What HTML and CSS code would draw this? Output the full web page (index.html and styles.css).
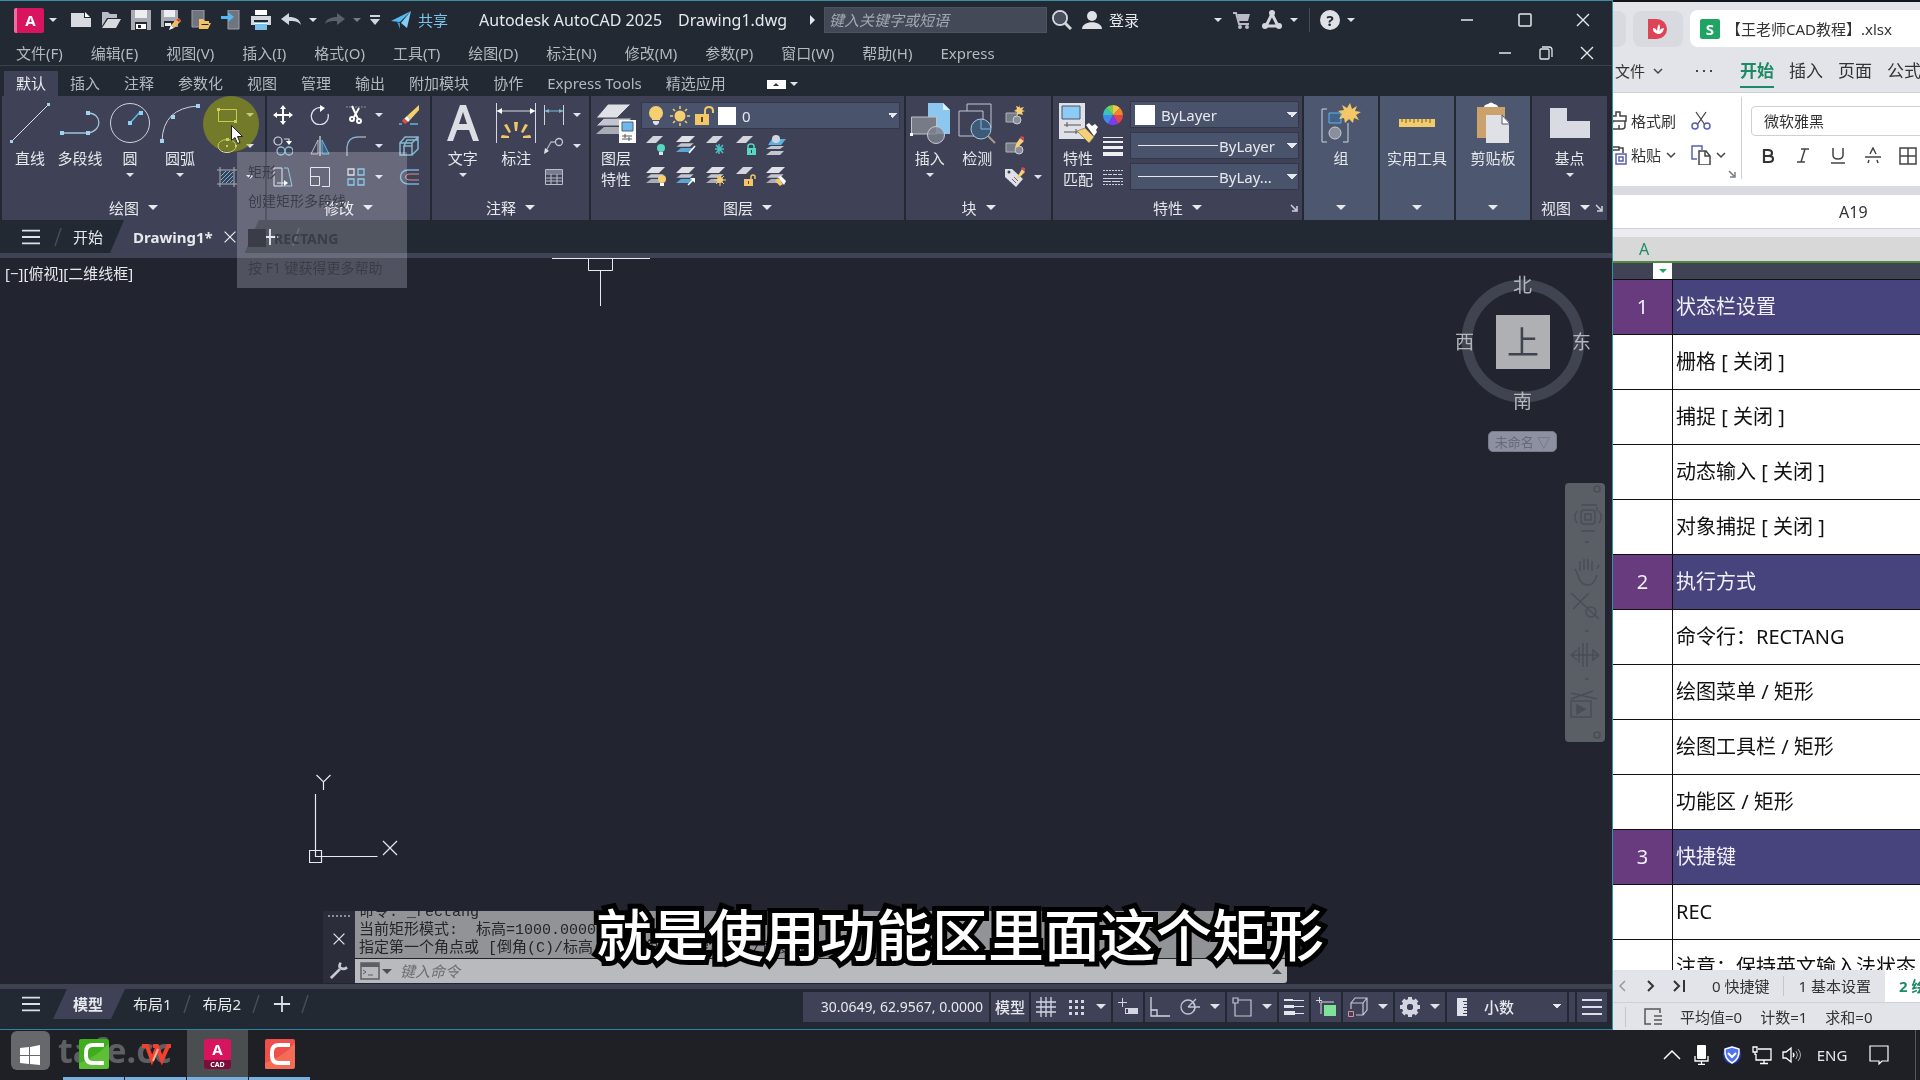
FILE: index.html
```html
<!DOCTYPE html>
<html lang="zh-CN">
<head>
<meta charset="utf-8">
<title>Autodesk AutoCAD 2025</title>
<link rel="stylesheet" href="styles.css">
</head>
<body>
<svg class="sprite" aria-hidden="true">
  <symbol id="new" viewBox="0 0 20 20"><path fill="#d8dae0" d="M0 3h13v5h7v9H0z"/><path fill="#fff" d="M14 2l5 5h-5z"/></symbol>
  <symbol id="open" viewBox="0 0 20 20"><path fill="#b9bcc6" d="M1 2h6l2 2h7v4H6L1 16z"/><path fill="#d8dae0" d="M7 9h13l-5 9H1z"/></symbol>
  <symbol id="save" viewBox="0 0 20 20"><path fill="#a9abb3" d="M0 0h20v20H0z"/><path fill="#eceef2" d="M4 0h12v8H4z"/><path fill="#222933" d="M4 12h12v8H4z"/><path fill="#fff" d="M5 14h10v5H5z"/><path fill="#222933" d="M7 15h3v3H7z"/></symbol>
  <symbol id="saveas" viewBox="0 0 20 20"><path fill="#a9abb3" d="M0 0h17v17H0z"/><path fill="#eceef2" d="M3 0h11v7H3z"/><path fill="#222933" d="M3 11h10v6H3z"/><path fill="#eceef2" d="M4 13h6v3H4z"/><path fill="#f3bd62" d="M17 8l3 3-7 7-3-3z"/><path fill="#c8473d" d="M18 8l2 2-2 2-3-2z"/><path fill="#fff" d="M10 15l3 3-5 2z"/></symbol>
  <symbol id="openweb" viewBox="0 0 20 20"><path fill="#70747f" stroke="#9da1ab" d="M1 0h12v17H1z"/><path fill="#f2c168" d="M8 9h4l2 2h4v2h2l-3 6H8z"/><path fill="#222933" d="M10 14h8l-1 1h-6z"/></symbol>
  <symbol id="saveweb" viewBox="0 0 20 20"><path fill="#70747f" stroke="#9da1ab" d="M7 0h11v19H7z"/><path fill="#58b7ef" d="M0 6h7V2l6 5-6 5V9H0z"/></symbol>
  <symbol id="print" viewBox="0 0 20 20"><path fill="#fff" d="M4 0h12v5H4z"/><path fill="#d3d6dc" d="M0 6h20v9H0z"/><path fill="#222933" d="M3 10h14v2H3z"/><path fill="#7cbfe8" d="M4 12h12v8H4z"/><path fill="#fff" d="M4 13h12v1H4z"/></symbol>
  <symbol id="undo" viewBox="0 0 20 20"><path fill="#d3d6dc" d="M0 9l8-6v4c6 0 11 2 12 8-3-4-7-4-12-4v4z"/></symbol>
  <symbol id="redo" viewBox="0 0 20 20"><path fill="#5a606b" d="M20 9l-8-6v4C6 7 1 9 0 14c3-3 7-3 12-3v4z"/></symbol>
  <symbol id="custom" viewBox="0 0 20 20"><path fill="#d3d6dc" d="M5 5h10v2H5zM5 9h10l-5 6z"/></symbol>
  <symbol id="plane" viewBox="0 0 20 20"><path fill="#58b7ef" d="M0 11L20 1 9 12z"/><path fill="#86cdf5" d="M20 1l-4 17-6-5z"/><path fill="#3b95cf" d="M6 12l3 1v6z"/></symbol>
  <symbol id="search" viewBox="0 0 20 20"><g fill="none" stroke="#d3d6dc" stroke-width="2"><circle cx="8" cy="8" r="7"/><path stroke-width="3" d="M13 13l6 6"/></g><circle cx="8" cy="8" r="6" fill="#4a505d"/></symbol>
  <symbol id="user" viewBox="0 0 20 20"><circle cx="10" cy="6" r="5" fill="#dfe1e6"/><path fill="#dfe1e6" d="M0 19c0-9 20-9 20 0z"/></symbol>
  <symbol id="cart" viewBox="0 0 20 20"><path fill="none" stroke="#b9bbc6" stroke-width="2" d="M1 3h3l3 11h10"/><path fill="#b9bbc6" d="M5 4h13l-2 7H7z"/><circle cx="8" cy="17" r="2" fill="#b9bbc6"/><circle cx="15" cy="17" r="2" fill="#b9bbc6"/></symbol>
  <symbol id="apps" viewBox="0 0 20 20"><path fill="none" stroke="#d3d6dc" stroke-width="3" d="M10 4L4 16h12z"/><g fill="#d3d6dc"><circle cx="10" cy="3" r="3"/><circle cx="3" cy="16" r="3"/><circle cx="17" cy="16" r="3"/></g></symbol>
  <symbol id="min" viewBox="0 0 20 20"><path fill="none" stroke="#e6e8ec" stroke-width="1.5" d="M4 10h12"/></symbol>
  <symbol id="max" viewBox="0 0 20 20"><rect x="4" y="4" width="12" height="12" rx="1" fill="none" stroke="#e6e8ec" stroke-width="1.5"/></symbol>
  <symbol id="restore" viewBox="0 0 20 20"><g fill="none" stroke="#e6e8ec" stroke-width="1.3"><rect x="4" y="6" width="9" height="10" rx="1"/><path d="M6 4h7q3 0 3 3v7"/></g></symbol>
  <symbol id="close" viewBox="0 0 20 20"><path fill="none" stroke="#e6e8ec" stroke-width="1.4" d="M4 4l12 12M16 4L4 16"/></symbol>
  <symbol id="menu" viewBox="0 0 20 20"><path fill="none" stroke="#dcdfe8" stroke-width="2" d="M0 3h20M0 10h20M0 17h20"/></symbol>
  <symbol id="plus" viewBox="0 0 20 20"><path fill="none" stroke="#dcdfe8" stroke-width="2" d="M10 1v18M1 10h18"/></symbol>
  <symbol id="slash" viewBox="0 0 8 20"><path fill="none" stroke="#454c5b" stroke-width="1.5" d="M1 19L7 1"/></symbol>

  <symbol id="line" viewBox="0 0 40 40"><path stroke="#dfe2ea" d="M2 38L38 2"/><path fill="#9fd3ee" d="M0 37h3v3H0zM37 0h3v3h-3z"/></symbol>
  <symbol id="pline" viewBox="0 0 40 40"><path fill="none" stroke="#9fc3da" stroke-width="1.3" d="M2 30h26c15-2 14-20 0-20"/><path fill="#9fd3ee" d="M0 28h4v4H0zM26 28h4v4h-4zM26 8h4v4h-4z"/></symbol>
  <symbol id="circle" viewBox="0 0 40 40"><circle cx="20" cy="20" r="19.5" fill="none" stroke="#cfd2dc"/><path stroke="#63b4e4" stroke-width="1.5" d="M20 20L30 9"/><path fill="#8cd0f3" d="M18 18h4v4h-4zM29 8h4v4h-4z"/></symbol>
  <symbol id="arc" viewBox="0 0 40 40"><path fill="none" stroke="#cfd2dc" d="M2 38Q3 5 38 3"/><path fill="#9fd3ee" d="M0 36h4v4H0zM36 1h4v4h-4zM11 12h4v4h-4z"/></symbol>
  <symbol id="rect" viewBox="0 0 20 20"><path fill="none" stroke="#e5e79a" d="M1.500 4.500h18v12h-18z"/><path fill="#e9ecc0" d="M0 3h3v3H0zM17 15h3v3h-3z"/></symbol>
  <symbol id="ellipse" viewBox="0 0 20 20"><ellipse cx="10" cy="10" rx="9" ry="6.500" fill="none" stroke="#e5e79a"/><path fill="#e9ecc0" d="M9 9h2v2H9zM18 9h2v2h-2zM9 2h3v3H9z"/></symbol>
  <symbol id="hatch" viewBox="0 0 20 20"><path fill="none" stroke="#a9aebc" d="M3 0v20M17 0v20M0 3h20M0 17h20"/><path fill="none" stroke="#64b7dd" d="M4 9l5-5M4 13l9-9M5 16L16 5M9 16l7-7M13 16l3-3"/></symbol>
  <symbol id="move" viewBox="0 0 20 20"><path stroke="#fff" stroke-width="2" d="M10 2v16M2 10h16"/><path fill="#fff" d="M10 0l3 4H7zM10 20l3-4H7zM0 10l4-3v6zM20 10l-4-3v6z"/></symbol>
  <symbol id="rotate" viewBox="0 0 20 20"><path fill="none" stroke="#dfe2ea" stroke-width="1.3" d="M12 3a8.500 8.500 0 1 0 6 6"/><path fill="#fff" d="M10 0l5 3-5 4z"/></symbol>
  <symbol id="trim" viewBox="0 0 20 20"><path stroke="#888da0" stroke-dasharray="2 1" d="M0 2h20"/><path fill="none" stroke="#fff" stroke-width="2" d="M6 1l6 13M13 3L8 12"/><circle cx="6" cy="14" r="2" fill="none" stroke="#fff" stroke-width="2"/><circle cx="13" cy="16" r="2" fill="none" stroke="#fff" stroke-width="2"/></symbol>
  <symbol id="erase" viewBox="0 0 20 20"><path stroke="#63b4e4" stroke-width="1.300" d="M0 19h3M11 19h8"/><path fill="#f5cf6b" d="M20 0v5L11 15l-3-4z"/><path fill="#fff" d="M8 11l3 4-2 2-4-3z"/><path fill="#e0503e" d="M5 13l4 4-3 2-3-3z"/></symbol>
  <symbol id="copy" viewBox="0 0 20 20"><g fill="none" stroke="#cfd2dc" stroke-width="1.200"><circle cx="5" cy="5" r="4"/><path d="M11 3h5v3"/></g><path fill="#fff" d="M13 5h6l-3 4z"/><g fill="none" stroke="#88bdd8" stroke-width="1.300"><circle cx="8" cy="15" r="4"/><circle cx="16" cy="15" r="4"/></g></symbol>
  <symbol id="mirror" viewBox="0 0 20 20"><path stroke="#fff" d="M10 0v20"/><path fill="none" stroke="#b6bbc8" d="M8 4v14H1z"/><path fill="#39637f" stroke="#63b4e4" d="M12 4v14h7z"/></symbol>
  <symbol id="fillet" viewBox="0 0 20 20"><path fill="none" stroke="#7fb9d8" stroke-width="1.300" d="M1 11Q2 1 12 1"/><path fill="none" stroke="#cfd2dc" d="M1 11v9M12 1h8"/></symbol>
  <symbol id="explode" viewBox="0 0 20 20"><path fill="none" stroke="#85b7ce" stroke-width="1.500" d="M1 7h12v12H1zM1 7l5-6h13v12l-6 6M13 7l6-6M5 10v9M13 10H5l3-6h11"/></symbol>
  <symbol id="stretch" viewBox="0 0 20 20"><path fill="none" stroke="#dfe2ea" d="M1 1h8v18H1zM4 16h8"/><path fill="none" stroke="#7fb9d8" d="M11 1h4l4 18H9"/><path fill="#fff" d="M11 13l4 3-4 3z"/></symbol>
  <symbol id="scale" viewBox="0 0 20 20"><path fill="none" stroke="#dfe2ea" d="M.5 12V.5h19v19H12M.5 9.500h9v9h-9z"/></symbol>
  <symbol id="array" viewBox="0 0 20 20"><g fill="none" stroke-width="1.300"><path stroke="#d5d8e0" d="M2 2h6v6H2z"/><path stroke="#71bce0" d="M12 2h6v6h-6zM2 12h6v6H2zM12 12h6v6h-6z"/></g></symbol>
  <symbol id="offset" viewBox="0 0 20 20"><path fill="none" stroke="#6fb4d8" stroke-width="1.300" d="M20 3H9c-10 0-10 14 0 14h11"/><path fill="none" stroke="#e08a92" d="M20 7h-9c-6 0-6 6 0 6h9"/></symbol>
  <symbol id="text" viewBox="0 0 40 40"><path fill="#dcdee4" d="M4 38L17 2h6l13 36h-6l-4-11H14l-4 11zM16 21h8L20 9z"/></symbol>
  <symbol id="dim" viewBox="0 0 40 40"><path stroke="#d5d8e0" d="M.5 0v40M39.500 0v40M0 8h40"/><path fill="#fff" d="M1 8l5-3v6zM39 8l-5-3v6z"/><g fill="#f3c767"><path d="M18 19h4l-1 9h-2zM8 22l3-1 4 8-2 1zM32 22l-3-1-4 8 2 1zM5 34l1-2 7 1v2H5zM35 34l-1-2-7 1v2h8z"/></g></symbol>
  <symbol id="lindim" viewBox="0 0 20 20"><path stroke="#cfd2dc" d="M.5 0v20M19.500 0v20"/><path stroke="#7fb9d8" d="M1 6h18"/><path fill="#7fb9d8" d="M1 6l4-2v4zM19 6l-4-2v4z"/></symbol>
  <symbol id="leader" viewBox="0 0 20 20"><path fill="none" stroke="#a9aebc" stroke-width="1.300" d="M2 15L7 6h5"/><circle cx="15" cy="6" r="3.500" fill="none" stroke="#c5c9d4" stroke-width="1.300"/><path fill="#dfe2ea" d="M0 18l1-6 4 3z"/></symbol>
  <symbol id="table" viewBox="0 0 20 20"><path fill="none" stroke="#b9bdca" d="M1.500 2.500h17v15h-17zM1 7h18M1 11h18M1 14h18M7 7v11M13 7v11"/><path fill="#777c8e" d="M2 3h16v3H2z"/></symbol>

  <symbol id="stack" viewBox="0 0 20 20"><path fill="#a9acb5" d="M5 13h13l-4 4H0z"/><path fill="#c3c6cf" d="M5 8h13l-4 4H0z" stroke="#3f4256" stroke-width=".5"/><path fill="#dfe1e6" d="M6 1h13l-6 6H0z"/></symbol>
  <symbol id="stackblue" viewBox="0 0 20 20"><path fill="#5ba5d4" d="M5 13h13l-4 4H0z"/><path fill="#c3c6cf" d="M5 8h13l-4 4H0z" stroke="#3f4256" stroke-width=".5"/><path fill="#dfe1e6" d="M6 1h13l-6 6H0z"/></symbol>
  <symbol id="sheet" viewBox="0 0 20 20"><path fill="#d3d5dc" d="M7 1h10l-7 7H0z"/></symbol>
  <symbol id="bulb" viewBox="0 0 20 20"><circle cx="10" cy="7" r="7" fill="#f6cf73"/><path fill="#f6cf73" d="M6 11h8v3H6z"/><path fill="#dfe1e6" d="M7 15h6v2l-2 2H9l-2-2z"/></symbol>
  <symbol id="sun" viewBox="0 0 20 20"><circle cx="10" cy="10" r="5.500" fill="#f6cf73"/><path stroke="#f6cf73" stroke-width="1.500" d="M10 0v3M10 17v3M0 10h3M17 10h3M3 3l2 2M15 15l2 2M17 3l-2 2M3 17l2-2"/></symbol>
  <symbol id="unlock" viewBox="0 0 20 20"><path fill="none" stroke="#f3c767" stroke-width="2" d="M11 9V5q0-4 4-4t4 4v2"/><path fill="#f3c767" d="M1 8h14v11H1z"/><path fill="#5d4a20" d="M7 11h2v5H7z"/></symbol>
  <symbol id="layoff" viewBox="0 0 20 20"><use href="#sheet"/><circle cx="15" cy="13" r="4" fill="#57d6c2"/><path fill="#dfe1e6" d="M13 17h4v3h-4z"/></symbol>
  <symbol id="layiso" viewBox="0 0 20 20"><use href="#stackblue"/><path stroke="#fff" stroke-width="1.500" d="M13 18l6-7"/></symbol>
  <symbol id="layfrz" viewBox="0 0 20 20"><use href="#sheet"/><path stroke="#4cc0c2" stroke-width="1.500" d="M13 9v10M9 14h9M10 10l7 8M17 10l-7 8"/></symbol>
  <symbol id="laylock" viewBox="0 0 20 20"><use href="#sheet"/><path fill="none" stroke="#57d6c2" stroke-width="1.500" d="M12 13v-2q0-2 3-2t3 2v2"/><path fill="#57d6c2" d="M11 13h9v7h-9z"/><path stroke="#236" d="M15.500 15v3"/></symbol>
  <symbol id="laymatch" viewBox="0 0 20 20"><path fill="#c3c6cf" d="M5 16h13l-4 4H0zM5 11h13l-4 3H0z"/><path fill="#5db0e4" d="M6 4h14l-5 6H2z"/><circle cx="10" cy="4" r="4" fill="#d3d5dc"/></symbol>
  <symbol id="layon" viewBox="0 0 20 20"><use href="#stack"/><circle cx="16" cy="13" r="4" fill="#f6cf73"/><path fill="#fff" d="M14 17h4v3h-4z"/></symbol>
  <symbol id="layprev" viewBox="0 0 20 20"><use href="#stackblue"/><path stroke="#fff" stroke-width="1.500" d="M12 19l5-5"/><path fill="#fff" d="M14 12h5v5z"/></symbol>
  <symbol id="laythaw" viewBox="0 0 20 20"><use href="#stack"/><circle cx="14" cy="14" r="3" fill="#f6cf73"/><path stroke="#f6cf73" d="M14 8v12M8 14h12M10 10l8 8M18 10l-8 8"/></symbol>
  <symbol id="layunl" viewBox="0 0 20 20"><use href="#sheet"/><path fill="none" stroke="#f3c767" stroke-width="1.500" d="M15 13v-2q0-2 2-2t2 2v2"/><path fill="#f3c767" d="M8 13h9v7H8z"/><path stroke="#5d4a20" d="M12.500 15v3"/></symbol>
  <symbol id="laycur" viewBox="0 0 20 20"><use href="#stack"/><path fill="#f3c767" d="M12 12l5 6-3 2-5-5z"/><path fill="#fff" d="M12 11l3-1 5 5-2 4z"/></symbol>
  <symbol id="layprop" viewBox="0 0 40 40"><path fill="#a9acb5" d="M8 24h28l-7 7H0z"/><path fill="#c3c6cf" d="M8 15h28l-7 8H0z" stroke="#3f4256"/><path fill="#dfe1e6" d="M12 1h23L21 15H0z" stroke="#3f4256"/><path fill="#fff" d="M23 17h17v23H23z"/><path fill="#6db7ea" stroke="#47627a" d="M26 19h11v9H26z"/><path stroke="#555" d="M26 33h10M26 36h10M29 31v4M33 34v4"/></symbol>
  <symbol id="insert" viewBox="0 0 40 42"><path fill="#8bc7ee" d="M18 1h15l7 7v24H18z"/><path fill="#d9f0fd" d="M33 1l7 7h-7z"/><path fill="#777b85" stroke="#c0c3cc" d="M1.500 15h25v17h-25z"/><circle cx="26" cy="33" r="8.500" fill="#7d828f" fill-opacity=".8" stroke="#c8cbd4"/><path fill="#fff" d="M0 31h3v3H0z"/></symbol>
  <symbol id="detect" viewBox="0 0 40 40"><path fill="#3f4256" stroke="#c3c6cf" d="M10 1h24v24H10z"/><path fill="#3f4256" stroke="#c3c6cf" d="M2 8h24v25H2z"/><circle cx="24" cy="26" r="10" fill="#3f5a78" stroke="#a6cbe2"/><path fill="none" stroke="#7fb9d8" d="M24 16v10h10"/><path stroke="#a98" stroke-width="2" d="M31 33l7 7"/></symbol>
  <symbol id="blknew" viewBox="0 0 20 20"><path fill="#777b85" stroke="#b0b3bd" d="M1 8h11v9H1z"/><circle cx="12" cy="15" r="4" fill="#8b8f9b" stroke="#c8cbd4"/><path fill="#f6cf73" d="M14 0l1 3 4-1-2 3 3 1-3 1 1 3-4-1-2 1v-3l-3-1 3-2-1-3 3 1z"/></symbol>
  <symbol id="blkedit" viewBox="0 0 20 20"><path fill="#777b85" stroke="#b0b3bd" d="M1 7h13v9H1z"/><circle cx="14" cy="14" r="4" fill="#8b8f9b" stroke="#c8cbd4"/><path fill="#f6cf73" d="M15 2l4 3-6 6-3 1 1-4z"/><path fill="#d6455a" d="M16 0l3 1v3l-4-2z"/></symbol>
  <symbol id="attr" viewBox="0 0 20 20"><path fill="#dfe1e6" d="M0 2h7l11 10-7 8L0 10z"/><circle cx="4" cy="5" r="1.500" fill="#3f4256"/><path stroke="#667" d="M7 12l4 4M9 10l4 4"/><path fill="#f6cf73" d="M17 2l3 3-6 6-3 1z"/><path fill="#d6455a" d="M17 0l3 1v3l-4-2z"/></symbol>
  <symbol id="match" viewBox="0 0 40 42"><path fill="#dfe1e6" d="M1 1h26v36H1z"/><path fill="#8bcbf5" stroke="#4a5568" d="M4 4h18v13H4z"/><path stroke="#555" d="M6 23h17M6 30h17M9 20v5M18 27v5"/><path fill="#f2cf78" stroke="#8b7a40" stroke-width=".7" d="M27 26l9 9-5 6-12-12z"/><path fill="#fff" d="M28 23l3-2 3 3 3-2 3 3-2 3 1 2-3 4z"/></symbol>
  <symbol id="wheel" viewBox="0 0 20 20"><path fill="#f4c542" d="M10 10V0a10 10 0 0 1 7 3z"/><path fill="#f0872f" d="M10 10l7-7a10 10 0 0 1 3 7z"/><path fill="#e2434c" d="M10 10h10a10 10 0 0 1-5 8.700z"/><path fill="#7a3cf0" d="M10 10l5 8.700a10 10 0 0 1-10 0z"/><path fill="#3e8bea" d="M10 10l-5 8.700A10 10 0 0 1 0 10z"/><path fill="#35c6c0" d="M10 10H0a10 10 0 0 1 3-7z"/><path fill="#6fd05a" d="M10 10L3 3a10 10 0 0 1 7-3z"/></symbol>
  <symbol id="lw" viewBox="0 0 20 20"><path fill="#eceef2" d="M0 1h20v1H0zM0 5h20v2H0zM0 10h20v3H0zM0 16h20v4H0z"/></symbol>
  <symbol id="lt" viewBox="0 0 20 20"><path fill="none" stroke="#cfd2dc" stroke-dasharray="2 1" d="M0 3.500h20"/><path fill="none" stroke="#cfd2dc" stroke-dasharray="4 1" d="M0 7.500h20"/><path fill="none" stroke="#cfd2dc" d="M0 11.500h20"/><path fill="none" stroke="#cfd2dc" stroke-dasharray="8 1" d="M0 14.500h20"/><path fill="none" stroke="#cfd2dc" stroke-dasharray="2 1" d="M0 17.500h20"/></symbol>
  <symbol id="group" viewBox="0 0 40 40"><path fill="none" stroke="#cfd2dc" d="M6 6H1v33h5M22 39h5V20"/><path fill="#41638c" stroke="#63b4e4" d="M8 10h12v10H8z"/><circle cx="14" cy="30" r="6" fill="#8b8f9b" stroke="#c8cbd4"/><path fill="#f3c767" d="M29 0l2 6 5-3-2 5 6 1-5 3 3 5-5-2-1 5-4-4-4 4-1-5-5 1 3-5-4-3 6-1-2-5 5 3z"/></symbol>
  <symbol id="ruler" viewBox="0 0 40 40"><path fill="#f3cb6b" d="M2 16h36v8H2z"/><path stroke="#6c5a2c" d="M5 16v3M9 16v4M13 16v3M17 16v4M21 16v3M25 16v4M29 16v3M33 16v4"/></symbol>
  <symbol id="clip" viewBox="0 0 40 42"><path fill="#cba26c" d="M4 5h28v31H4z"/><path fill="#fff" d="M11 5q0-2 4-3 3-3 6 0 4 1 4 3z"/><path fill="#dfe1e6" d="M13 13h16l7 7v21H13z"/><path fill="#fff" stroke="#4d5870" d="M29 13l8 9h-8z"/></symbol>
  <symbol id="base" viewBox="0 0 40 40"><path fill="#d8dbe2" d="M0 5h17v13h23v17H0z"/></symbol>
  <symbol id="corner" viewBox="0 0 10 10"><path fill="none" stroke="#cdd0da" stroke-width="1.500" d="M2 2l5 5M8 3v5H3"/></symbol>

  <symbol id="grid" viewBox="0 0 20 20"><path stroke="#d3d6e2" stroke-width="1.300" d="M5 0v20M10 0v20M15 0v20M0 5h20M0 10h20M0 15h20"/></symbol>
  <symbol id="snap" viewBox="0 0 20 20"><path fill="none" stroke="#d3d6e2" stroke-width="3" stroke-dasharray="3 3" d="M3 4.500h15M3 10.500h15M3 16.500h15"/></symbol>
  <symbol id="dyn" viewBox="0 0 20 20"><path stroke="#d3d6e2" d="M4.500 1v9M0 5.500h9"/><path fill="#d3d6e2" d="M7 11h13v6H7z"/><path fill="#3f4256" d="M8 12h2v4H8z"/></symbol>
  <symbol id="ortho" viewBox="0 0 20 20"><path fill="none" stroke="#d3d6e2" stroke-width="1.300" d="M1 0v19h19M1 13h6v6"/></symbol>
  <symbol id="polar" viewBox="0 0 20 20"><g fill="none" stroke="#c2c5d3" stroke-width="1.300"><circle cx="8" cy="10" r="7"/><path d="M8 10h12M8 10l8-8M13 6q3 3 1 8"/></g></symbol>
  <symbol id="osnap" viewBox="0 0 20 20"><path fill="none" stroke="#c2c5d3" stroke-width="1.200" d="M6 3h13v16H3V6M1 1h5v5H1z"/></symbol>
  <symbol id="lws" viewBox="0 0 20 20"><path fill="#e3e5ee" d="M0 2h9v2H0zM0 8h10v3H0zM0 14h11v4H0zM9 3h11v1H9zM10 9h10v1H10zM11 16h9v1h-9z"/></symbol>
  <symbol id="sel" viewBox="0 0 20 20"><path fill="none" stroke="#d3d6e2" d="M3.500 0v6M0 3.500h6M5 17V5h13"/><path fill="#7fe39a" d="M8 8h12v11H8z"/></symbol>
  <symbol id="box3" viewBox="0 0 20 20"><path fill="none" stroke="#c2c5d3" stroke-width="1.200" d="M3 12V6h12v12H8M3 6l4-5h12v12l-4 5M15 6l4-5"/><path fill="none" stroke="#d98f98" d="M.5 14.500h5v5h-5z"/></symbol>
  <symbol id="gear" viewBox="0 0 20 20"><circle cx="10" cy="10" r="5.500" fill="none" stroke="#d3d6e2" stroke-width="5"/><path stroke="#d3d6e2" stroke-width="4" stroke-linecap="butt" d="M10 0v4M10 16v4M0 10h4M16 10h4M3 3l3 3M14 14l3 3M17 3l-3 3M3 17l3-3"/><circle cx="10" cy="10" r="3" fill="#3f4256"/></symbol>
  <symbol id="scaler" viewBox="0 0 10 18"><path fill="#dfe1ea" d="M0 0h10v18H0z"/><path stroke="#3f4256" d="M6 3.500h4M7 6.500h3M6 9.500h4M7 12.500h3M6 15.500h4"/></symbol>
  <symbol id="wrench" viewBox="0 0 20 20"><path fill="none" stroke="#c7c9d0" stroke-width="3" d="M1 19l10-10"/><path fill="none" stroke="#c7c9d0" stroke-width="3" d="M12 2q-3 4 0 6 3 2 7-1"/></symbol>
  <symbol id="cmd" viewBox="0 0 20 18"><path fill="none" stroke="#5d5f66" stroke-width="1.500" d="M1 1h18v16H1z"/><path fill="#5d5f66" d="M1 1h18v4H1z"/><path fill="none" stroke="#5d5f66" d="M3 8l3 2-3 2M8 13h5"/></symbol>

  <symbol id="brush" viewBox="6 0 14 20"><path fill="none" stroke="#444" stroke-width="1.500" d="M0 5h9V1h4v4h6v5H0M4 18l2-8M18 10v5q0 3-3 3H6M12 14v4"/></symbol>
  <symbol id="paste" viewBox="6 0 14 20"><path fill="none" stroke="#444" stroke-width="1.500" d="M4 2h8v3H4M16 8V3h-4M6 18H2"/><path fill="none" stroke="#5a5fae" stroke-width="1.500" d="M9 9h10v10H9zM12 12h4v4h-4z"/></symbol>
  <symbol id="cut" viewBox="0 0 20 20"><path stroke="#444" stroke-width="1.300" d="M5 1l9 13M15 1L6 14"/><g fill="none" stroke="#5560b8" stroke-width="1.500"><circle cx="4" cy="15" r="3"/><circle cx="16" cy="15" r="3"/></g></symbol>
  <symbol id="copy2" viewBox="0 0 20 20"><path fill="none" stroke="#5560b8" stroke-width="1.500" d="M6 14H1V1h10v4"/><path fill="none" stroke="#444" stroke-width="1.500" d="M8 6h7l4 5v9H8zM14 6v5h5"/></symbol>
  <symbol id="chev" viewBox="0 0 10 10"><path fill="none" stroke="#444" stroke-width="1.500" d="M1 3l4 4 4-4"/></symbol>
  <symbol id="dots" viewBox="0 0 18 10"><path fill="#444" d="M1 4h2v2H1zM8 4h2v2H8zM15 4h2v2h-2z"/></symbol>
  <symbol id="strike" viewBox="0 0 18 18"><path fill="none" stroke="#444" stroke-width="1.500" d="M4 16l1-3M14 16l-1-3M6 7l3-6 3 6M1 10h16"/></symbol>
  <symbol id="borders" viewBox="0 0 18 18"><path fill="none" stroke="#444" stroke-width="1.500" d="M1 1h16v16H1zM9 1v16M1 9h16"/></symbol>
  <symbol id="bold" viewBox="0 0 18 18"><path fill="none" stroke="#333" stroke-width="2.200" d="M5 3h4q4 0 4 3t-4 3H5zM5 9h5q4 0 4 3t-4 3H5z"/></symbol>
  <symbol id="italic" viewBox="0 0 18 18"><path fill="none" stroke="#444" stroke-width="1.500" d="M7 2h8M3 15h8M11 2L7 15"/></symbol>
  <symbol id="underl" viewBox="0 0 18 18"><path fill="none" stroke="#444" stroke-width="1.500" d="M4 1v7q0 4 5 4t5-4V1M2 16h14"/></symbol>
  <symbol id="wpsd" viewBox="0 0 20 20"><path fill="#dd4557" d="M0 0h9a10 10 0 0 1 0 20H0z"/><path fill="#fff" d="M10 15Q4 13 5 9q3 0 4 3 0-4 2-7 2 4 0 7 2-3 5-3-1 6-6 6z"/></symbol>
  <symbol id="summary" viewBox="0 0 18 18"><path fill="none" stroke="#555" stroke-width="1.500" d="M16 5V1H1v15h6M10 8h8M10 12h8M10 16h8"/></symbol>
  <symbol id="left" viewBox="0 0 10 12"><path fill="none" stroke="#999" stroke-width="1.500" d="M7 1L2 6l5 5"/></symbol>
  <symbol id="right" viewBox="0 0 10 12"><path fill="none" stroke="#333" stroke-width="2" d="M2 1l5 5-5 5"/></symbol>
  <symbol id="last" viewBox="0 0 12 12"><path fill="none" stroke="#333" stroke-width="2" d="M1 1l5 5-5 5M11 0v12"/></symbol>

  <symbol id="win" viewBox="0 0 20 20"><path fill="#fff" d="M0 3l9-1v8H0zM10 2l10-2v10H10zM0 11h9v8l-9-1zM10 11h10v9l-10-1z"/></symbol>
  <symbol id="camg" viewBox="0 0 30 30"><rect width="30" height="30" rx="2" fill="#3fae1c"/><path fill="#7bd04f" d="M0 24Q18 18 30 4v24l-2 2H0z" opacity=".5"/><path fill="none" stroke="#fff" stroke-width="4" d="M25 6H14q-7 0-7 7v4q0 7 7 7h11"/></symbol>
  <symbol id="camr" viewBox="0 0 30 30"><rect width="30" height="30" rx="2" fill="#ef4f4b"/><path fill="#f98a62" d="M0 24Q18 18 30 4v24l-2 2H0z" opacity=".5"/><path fill="none" stroke="#fff" stroke-width="4" d="M25 6H14q-7 0-7 7v4q0 7 7 7h11"/></symbol>
  <symbol id="wps" viewBox="0 0 30 30"><path fill="none" stroke="#f2402f" stroke-width="4" d="M1 7h5l5 14 5-12M12 7h4l5 14 6-14h3"/><path stroke="#ffb09a" stroke-width="2" d="M12 22l5-12"/></symbol>
  <symbol id="up" viewBox="0 0 20 20"><path fill="none" stroke="#fff" stroke-width="1.500" d="M2 14l8-8 8 8"/></symbol>
  <symbol id="mic" viewBox="0 0 20 20"><rect x="5" y="0" width="9" height="14" rx="1" fill="#fff"/><path fill="none" stroke="#fff" stroke-width="1.300" d="M3 11v5h13v-5M9.500 16v4M6 19.500h7"/></symbol>
  <symbol id="shield" viewBox="0 0 20 20"><circle cx="10" cy="10" r="9" fill="#2138b8"/><path fill="#4f74ee" stroke="#fff" stroke-width="1.500" d="M10 2l7 2q1 10-7 14Q2 14 3 4z"/><path fill="none" stroke="#fff" stroke-width="2" d="M6 8l4 4 4-4"/></symbol>
  <symbol id="net" viewBox="0 0 20 20"><path fill="none" stroke="#fff" stroke-width="1.300" d="M6 4h13v11H4V9M8 18.500h8M12 15v3M1 2h4v5H1zM3 7v3"/></symbol>
  <symbol id="vol" viewBox="0 0 20 20"><path fill="none" stroke="#fff" stroke-width="1.300" d="M1 7h3l5-4v14l-5-4H1zM11 8q2 2 0 4"/><path fill="none" stroke="#aaa" d="M14 6q3 4 0 8M16 4q5 6 0 12"/></symbol>
  <symbol id="msg" viewBox="0 0 20 20"><path fill="none" stroke="#fff" stroke-width="1.200" d="M1 1h18v15h-6l-3 3v-3H1z"/></symbol>
</svg>

<main class="desktop">
  <section class="cad">
    <header class="titlebar">
      <button class="logo" aria-label="应用程序菜单">A</button>
      <button class="dd w18" aria-label="展开"></button>
      <div class="quick">
        <button aria-label="新建"><svg><use href="#new"/></svg></button>
        <button aria-label="打开"><svg><use href="#open"/></svg></button>
        <button aria-label="保存"><svg><use href="#save"/></svg></button>
        <button aria-label="另存为"><svg><use href="#saveas"/></svg></button>
        <button aria-label="从 Web 打开"><svg><use href="#openweb"/></svg></button>
        <button aria-label="保存到 Web"><svg><use href="#saveweb"/></svg></button>
        <button aria-label="打印"><svg><use href="#print"/></svg></button>
        <button aria-label="放弃"><svg><use href="#undo"/></svg></button>
      </div>
      <button class="dd w14" aria-label="放弃列表"></button>
      <button class="tool30" aria-label="重做"><svg><use href="#redo"/></svg></button>
      <button class="dd w14 dim" aria-label="重做列表"></button>
      <button class="tool22" aria-label="自定义"><svg><use href="#custom"/></svg></button>
      <button class="share"><svg><use href="#plane"/></svg>共享</button>
      <h1 class="product">Autodesk AutoCAD 2025</h1>
      <span class="docname">Drawing1.dwg</span>
      <i class="play"></i>
      <input class="search" type="text" placeholder="键入关键字或短语" aria-label="搜索">
      <button class="tool30" aria-label="搜索"><svg><use href="#search"/></svg></button>
      <button class="login"><svg><use href="#user"/></svg>登录</button>
      <div class="titletools">
        <button class="dd w18" aria-label="登录菜单"></button>
        <button class="tool30" aria-label="商店"><svg><use href="#cart"/></svg></button>
        <button class="tool30" aria-label="应用"><svg><use href="#apps"/></svg></button>
        <button class="dd w14" aria-label="应用列表"></button>
        <i class="vsep"></i>
        <button class="help" aria-label="帮助">?</button>
        <button class="dd w22" aria-label="帮助菜单"></button>
      </div>
      <div class="winbtns">
        <button aria-label="最小化"><svg><use href="#min"/></svg></button>
        <button aria-label="最大化"><svg><use href="#max"/></svg></button>
        <button aria-label="关闭"><svg><use href="#close"/></svg></button>
      </div>
    </header>
    <nav class="menubar">
      <a href="#f">文件(F)</a><a href="#e">编辑(E)</a><a href="#v">视图(V)</a><a href="#i">插入(I)</a><a href="#o">格式(O)</a><a href="#t">工具(T)</a><a href="#d">绘图(D)</a><a href="#n">标注(N)</a><a href="#m">修改(M)</a><a href="#p">参数(P)</a><a href="#w">窗口(W)</a><a href="#h">帮助(H)</a><a href="#x">Express</a>
      <div class="docbtns">
        <button aria-label="最小化文档"><svg><use href="#min"/></svg></button>
        <button aria-label="还原文档"><svg><use href="#restore"/></svg></button>
        <button aria-label="关闭文档"><svg><use href="#close"/></svg></button>
      </div>
    </nav>
    <nav class="tabs">
      <button class="on">默认</button><button>插入</button><button>注释</button><button>参数化</button><button>视图</button><button>管理</button><button>输出</button><button>附加模块</button><button>协作</button><button>Express Tools</button><button>精选应用</button>
      <button class="fold" aria-label="最小化功能区"></button><button class="dd w14" aria-label="功能区选项"></button>
    </nav>
    <div class="ribbon">
      <section class="panel p-draw">
        <div class="body">
          <button class="big"><svg><use href="#line"/></svg><span>直线</span></button>
          <button class="big"><svg><use href="#pline"/></svg><span>多段线</span></button>
          <button class="big more"><svg><use href="#circle"/></svg><span>圆</span></button>
          <button class="big more"><svg><use href="#arc"/></svg><span>圆弧</span></button>
          <div class="small two">
            <button aria-label="矩形"><svg><use href="#rect"/></svg></button><button class="dd" aria-label="矩形列表"></button>
            <button aria-label="椭圆"><svg><use href="#ellipse"/></svg></button><button class="dd" aria-label="椭圆列表"></button>
            <button aria-label="图案填充"><svg><use href="#hatch"/></svg></button><button class="dd" aria-label="填充列表"></button>
          </div>
        </div>
        <button class="foot">绘图</button>
      </section>
      <section class="panel p-mod">
        <div class="body">
          <div class="small five">
            <button aria-label="移动"><svg><use href="#move"/></svg></button><button aria-label="旋转"><svg><use href="#rotate"/></svg></button><button aria-label="修剪"><svg><use href="#trim"/></svg></button><button class="dd" aria-label="修剪列表"></button><button aria-label="删除"><svg><use href="#erase"/></svg></button>
            <button aria-label="复制"><svg><use href="#copy"/></svg></button><button aria-label="镜像"><svg><use href="#mirror"/></svg></button><button aria-label="圆角"><svg><use href="#fillet"/></svg></button><button class="dd" aria-label="圆角列表"></button><button aria-label="分解"><svg><use href="#explode"/></svg></button>
            <button aria-label="拉伸"><svg><use href="#stretch"/></svg></button><button aria-label="缩放"><svg><use href="#scale"/></svg></button><button aria-label="阵列"><svg><use href="#array"/></svg></button><button class="dd" aria-label="阵列列表"></button><button aria-label="偏移"><svg><use href="#offset"/></svg></button>
          </div>
        </div>
        <button class="foot">修改</button>
      </section>
      <section class="panel p-ann">
        <div class="body">
          <button class="big more"><svg><use href="#text"/></svg><span>文字</span></button>
          <button class="big"><svg><use href="#dim"/></svg><span>标注</span></button>
          <div class="small two">
            <button aria-label="线性"><svg><use href="#lindim"/></svg></button><button class="dd" aria-label="线性列表"></button>
            <button aria-label="引线"><svg><use href="#leader"/></svg></button><button class="dd" aria-label="引线列表"></button>
            <button aria-label="表格"><svg><use href="#table"/></svg></button>
          </div>
        </div>
        <button class="foot">注释</button>
      </section>
      <section class="panel p-lay">
        <div class="body">
          <button class="big"><svg><use href="#layprop"/></svg><span>图层<br>特性</span></button>
          <div class="laycol">
            <div class="combo">
              <svg><use href="#bulb"/></svg><svg><use href="#sun"/></svg><svg><use href="#unlock"/></svg><i class="swatch"></i>
              <select aria-label="图层"><option>0</option></select>
            </div>
            <div class="layicons">
              <button aria-label="关"><svg><use href="#layoff"/></svg></button><button aria-label="隔离"><svg><use href="#layiso"/></svg></button><button aria-label="冻结"><svg><use href="#layfrz"/></svg></button><button aria-label="锁定"><svg><use href="#laylock"/></svg></button><button aria-label="置为当前"><svg><use href="#laymatch"/></svg></button>
              <button aria-label="打开所有图层"><svg><use href="#layon"/></svg></button><button aria-label="取消隔离"><svg><use href="#layprev"/></svg></button><button aria-label="解冻"><svg><use href="#laythaw"/></svg></button><button aria-label="解锁"><svg><use href="#layunl"/></svg></button><button aria-label="匹配图层"><svg><use href="#laycur"/></svg></button>
            </div>
          </div>
        </div>
        <button class="foot">图层</button>
      </section>
      <section class="panel p-blk">
        <div class="body">
          <button class="big more"><svg><use href="#insert"/></svg><span>插入</span></button>
          <button class="big"><svg><use href="#detect"/></svg><span>检测</span></button>
          <div class="small two">
            <button aria-label="创建块"><svg><use href="#blknew"/></svg></button><i></i>
            <button aria-label="编辑块"><svg><use href="#blkedit"/></svg></button><i></i>
            <button aria-label="编辑属性"><svg><use href="#attr"/></svg></button><button class="dd" aria-label="属性列表"></button>
          </div>
        </div>
        <button class="foot">块</button>
      </section>
      <section class="panel p-prop">
        <div class="body">
          <button class="big"><svg><use href="#match"/></svg><span>特性<br>匹配</span></button>
          <div class="small props">
            <svg><use href="#wheel"/></svg><div class="combo"><i class="swatch"></i><select aria-label="颜色"><option>ByLayer</option></select></div>
            <svg><use href="#lw"/></svg><div class="combo"><i class="rule"></i><select aria-label="线宽"><option>ByLayer</option></select></div>
            <svg><use href="#lt"/></svg><div class="combo"><i class="rule"></i><select aria-label="线型"><option>ByLay...</option></select></div>
          </div>
        </div>
        <div class="footrow"><button class="foot">特性</button><button class="corner" aria-label="特性选项板"><svg><use href="#corner"/></svg></button></div>
      </section>
      <section class="panel lite"><div class="body"><button class="big"><svg><use href="#group"/></svg><span>组</span></button></div><button class="foot" aria-label="展开组"></button></section>
      <section class="panel lite"><div class="body"><button class="big"><svg><use href="#ruler"/></svg><span>实用工具</span></button></div><button class="foot" aria-label="展开实用工具"></button></section>
      <section class="panel lite"><div class="body"><button class="big"><svg><use href="#clip"/></svg><span>剪贴板</span></button></div><button class="foot" aria-label="展开剪贴板"></button></section>
      <section class="panel p-view"><div class="body"><button class="big more"><svg><use href="#base"/></svg><span>基点</span></button></div>
        <div class="footrow"><button class="foot">视图</button><button class="corner" aria-label="视图选项"><svg><use href="#corner"/></svg></button></div>
      </section>
      <div class="halo" aria-hidden="true"></div>
    </div>
    <nav class="doctabs">
      <button class="ham" aria-label="文件选项卡菜单"><svg><use href="#menu"/></svg></button>
      <svg class="slash"><use href="#slash"/></svg>
      <button class="start">开始</button>
      <div class="doctab"><button class="name">Drawing1*</button><button class="x" aria-label="关闭 Drawing1"><svg><use href="#close"/></svg></button></div>
      <button class="add" aria-label="新图形"><svg><use href="#plus"/></svg></button>
      <svg class="slash"><use href="#slash"/></svg>
    </nav>
    <div class="canvas">
      <p class="vp">[−][俯视][二维线框]</p>
      <svg class="cross" viewBox="0 0 98 50"><path fill="none" stroke="#e8eaf2" d="M0 .5h98M36.500 0v12.500h24V0M48.500 12v36"/></svg>
      <svg class="ucs" viewBox="0 0 90 92"><path fill="none" stroke="#e8eaf2" stroke-width="1.200" d="M6.500 20v62.500h62M.5 76.500h12v12h-12zM7.500 1l7 7 7-7M14.500 8v8M74 67l14 14M88 67L74 81"/></svg>
      <div class="cube">
        <svg viewBox="0 0 124 124"><circle cx="62" cy="62" r="56" fill="none" stroke="#3f4450" stroke-width="11"/></svg>
        <b class="north">北</b><b class="west">西</b><b class="east">东</b><b class="south">南</b>
        <button class="face">上</button>
      </div>
      <button class="ucsname">未命名 ▽</button>
      <aside class="navbar">
        <svg viewBox="0 0 40 258"><g fill="none" stroke="#494e56" stroke-width="1.500"><circle cx="32" cy="6" r="3"/><circle cx="32" cy="252" r="3"/><path d="M16 22h16M32 24v4M12 28a10 10 0 0 0 0 12M34 28a10 10 0 0 1 0 12M16 30q0-3 3-3h8q3 0 3 3v8q0 3-3 3h-8q-3 0-3-3zM20 31h6v6h-6zM16 48h14M20 59h4M13 92l-3-6M15 88V78M19 87V76M23 87V76M27 88V78M32 86l2-4M13 92q2 10 10 10 6 0 9-10M6 110l28 26M24 110L8 126M20 148h4M6 172h28M14 164v16M18 160v24M22 160v24M28 166v12M6 172l6-5M6 172l6 5M34 172l-6-5M34 172l-6 5M20 196h4M6 210l26 6M6 216l22-8M6 218h20v16H6z"/><circle cx="26" cy="129" r="5"/><path fill="#494e56" d="M12 222v9l8-5z"/></g></svg>
      </aside>
      <div class="command">
        <div class="side"><i class="grip"></i><button aria-label="关闭命令行"><svg><use href="#close"/></svg></button><button aria-label="自定义命令行"><svg><use href="#wrench"/></svg></button></div>
        <div class="main">
          <div class="hist"><p>命令: _rectang</p><p>当前矩形模式:&nbsp; 标高=1000.0000</p><p>指定第一个角点或 [倒角(C)/标高(E)/圆角(F)/厚度(T)/宽度(W)]:</p></div>
          <div class="entry"><svg><use href="#cmd"/></svg><i class="tri"></i><input type="text" placeholder="键入命令" aria-label="命令"><i class="tri up"></i></div>
        </div>
      </div>
    </div>
    <footer class="status">
      <button class="ham" aria-label="布局菜单"><svg><use href="#menu"/></svg></button>
      <button class="model">模型</button>
      <button class="lay">布局1</button><svg class="slash"><use href="#slash"/></svg>
      <button class="lay">布局2</button><svg class="slash"><use href="#slash"/></svg>
      <button class="add" aria-label="新布局"><svg><use href="#plus"/></svg></button><svg class="slash"><use href="#slash"/></svg>
      <div class="cells">
        <div class="cell coords">30.0649, 62.9567, 0.0000</div>
        <button class="cell mspace">模型</button>
        <div class="cell menu"><button aria-label="栅格"><svg><use href="#grid"/></svg></button><button aria-label="捕捉"><svg><use href="#snap"/></svg></button><button class="dd" aria-label="捕捉设置"></button></div>
        <div class="cell"><button aria-label="动态输入"><svg><use href="#dyn"/></svg></button></div>
        <div class="cell menu"><button aria-label="正交"><svg><use href="#ortho"/></svg></button><button aria-label="极轴"><svg><use href="#polar"/></svg></button><button class="dd" aria-label="极轴设置"></button></div>
        <div class="cell menu"><button aria-label="对象捕捉"><svg><use href="#osnap"/></svg></button><button class="dd" aria-label="对象捕捉设置"></button></div>
        <div class="cell"><button aria-label="线宽"><svg><use href="#lws"/></svg></button></div>
        <div class="cell"><button aria-label="选择循环"><svg><use href="#sel"/></svg></button></div>
        <div class="cell menu"><button aria-label="三维对象捕捉"><svg><use href="#box3"/></svg></button><button class="dd" aria-label="三维捕捉设置"></button></div>
        <div class="cell menu"><button aria-label="工作空间"><svg><use href="#gear"/></svg></button><button class="dd" aria-label="切换工作空间"></button></div>
        <div class="cell units"><svg><use href="#scaler"/></svg><select aria-label="单位"><option>小数</option></select></div>
        <div class="cell thin"></div>
        <button class="cell" aria-label="自定义"><svg><use href="#menu"/></svg></button>
      </div>
    </footer>
    <div class="tooltip" role="tooltip"><p>矩形</p><p>创建矩形多段线</p><p class="key"><i></i>RECTANG</p><p>按 F1 键获得更多帮助</p></div>
    <svg class="cursor" viewBox="0 0 12 19"><path fill="#fff" stroke="#222" d="M.5.5v15l3.500-3 2.500 6 2.500-1-2.500-6h5z"/></svg>
  </section>

  <section class="sheet">
    <nav class="files">
      <button class="ghost" aria-label="首页"></button>
      <button class="doc" aria-label="稻壳"><svg><use href="#wpsd"/></svg></button>
      <button class="file"><i class="badge">S</i>【王老师CAD教程】.xlsx</button>
    </nav>
    <nav class="smenu">
      <button class="sm">文件</button><svg class="chev"><use href="#chev"/></svg><i class="sep"></i>
      <button class="dots" aria-label="更多"><svg><use href="#dots"/></svg></button><i class="sep"></i>
      <div class="stabs"><a class="on" href="#s1">开始</a><a href="#s2">插入</a><a href="#s3">页面</a><a href="#s4">公式</a></div>
    </nav>
    <div class="stool">
      <div class="clipgrp">
        <button><svg class="cutoff"><use href="#brush"/></svg>格式刷</button><button aria-label="剪切"><svg><use href="#cut"/></svg></button>
        <button><svg class="cutoff"><use href="#paste"/></svg>粘贴<svg class="chev"><use href="#chev"/></svg></button><button aria-label="复制"><svg><use href="#copy2"/></svg><svg class="chev"><use href="#chev"/></svg></button>
        <svg class="launch"><use href="#corner"/></svg>
      </div>
      <div class="fontgrp">
        <input type="text" value="微软雅黑" aria-label="字体">
        <div class="fmt"><button aria-label="加粗"><svg><use href="#bold"/></svg></button><button aria-label="倾斜"><svg><use href="#italic"/></svg></button><button aria-label="下划线"><svg><use href="#underl"/></svg></button><button aria-label="删除线"><svg><use href="#strike"/></svg></button><button aria-label="边框"><svg><use href="#borders"/></svg></button></div>
      </div>
    </div>
    <div class="namebox"><input type="text" value="A19" aria-label="名称框"></div>
    <div class="colhead">A</div>
    <div class="filter"><button aria-label="筛选"></button></div>
    <div class="gridwrap">
      <table>
        <tr class="h"><td>1</td><td>状态栏设置</td></tr>
        <tr><td></td><td>栅格 [ 关闭 ]</td></tr>
        <tr><td></td><td>捕捉 [ 关闭 ]</td></tr>
        <tr><td></td><td>动态输入 [ 关闭 ]</td></tr>
        <tr><td></td><td>对象捕捉 [ 关闭 ]</td></tr>
        <tr class="h"><td>2</td><td>执行方式</td></tr>
        <tr><td></td><td>命令行：RECTANG</td></tr>
        <tr><td></td><td>绘图菜单 / 矩形</td></tr>
        <tr><td></td><td>绘图工具栏 / 矩形</td></tr>
        <tr><td></td><td>功能区 / 矩形</td></tr>
        <tr class="h"><td>3</td><td>快捷键</td></tr>
        <tr><td></td><td>REC</td></tr>
        <tr><td></td><td>注意：保持英文输入法状态</td></tr>
      </table>
    </div>
    <nav class="sheets">
      <button class="arr" aria-label="上一张"><svg><use href="#left"/></svg></button><button class="arr" aria-label="下一张"><svg><use href="#right"/></svg></button><button class="arr" aria-label="末张"><svg><use href="#last"/></svg></button>
      <button class="st">0 快捷键</button><i class="sep"></i><button class="st">1 基本设置</button><button class="st on">2 绘图</button>
    </nav>
    <footer class="sfoot"><i class="sep"></i><svg><use href="#summary"/></svg><span>平均值=0</span><span>计数=1</span><span>求和=0</span></footer>
  </section>
</main>

<footer class="taskbar">
  <div class="mark" aria-hidden="true"><i></i>tafe.cc</div>
  <button class="startbtn" aria-label="开始菜单"><svg><use href="#win"/></svg></button>
  <button class="app" aria-label="Camtasia"><svg><use href="#camg"/></svg></button>
  <button class="app" aria-label="WPS"><svg><use href="#wps"/></svg></button>
  <button class="app on" aria-label="AutoCAD"><span class="acad"><b>A</b><small>CAD</small></span></button>
  <button class="app" aria-label="录制"><svg><use href="#camr"/></svg></button>
  <div class="tray">
    <button aria-label="显示隐藏图标"><svg><use href="#up"/></svg></button><button aria-label="麦克风"><svg><use href="#mic"/></svg></button><button aria-label="安全"><svg><use href="#shield"/></svg></button><button aria-label="网络"><svg><use href="#net"/></svg></button><button aria-label="音量"><svg><use href="#vol"/></svg></button>
    <button class="lang">ENG</button><button class="note" aria-label="通知"><svg><use href="#msg"/></svg></button><i class="peek"></i>
  </div>
</footer>
<p class="subtitle">就是使用功能区里面这个矩形</p>
</body>
</html>
```
FILE: styles.css
```css
* { box-sizing: border-box; margin: 0; padding: 0; }
html, body { height: 100%; }
body {
  display: flex; flex-direction: column; overflow: hidden; background: #1e2025;
  font: 15px/20px "Noto Sans", "Noto Sans CJK SC", sans-serif; color: #e6e8ec;
}
button, input, select { font: inherit; color: inherit; background: none; border: 0; outline: 0; border-radius: 0; white-space: nowrap; }
select { appearance: none; }
a { color: inherit; text-decoration: none; white-space: nowrap; }
i { font-style: normal; }
svg { display: block; width: 20px; height: 20px; flex: none; }
.sprite { position: absolute; width: 0; height: 0; }

.desktop { flex: 1; min-height: 0; display: grid; grid-template-columns: minmax(0, 1fr) 307px; }

/* drop-down arrows */
.dd { display: grid; place-items: center; }
.dd::before { content: ""; border: 4px solid transparent; border-top-color: #dfe2ea; border-bottom: 0; }
.dd.dim::before { border-top-color: #777c86; }
.w14 { width: 14px; } .w18 { width: 18px; } .w22 { width: 22px; }

/* CAD window */
.cad { position: relative; display: flex; flex-direction: column; min-width: 0; background: #222933; border: 1px solid #3b8ea6; border-left: 0; border-bottom-color: #2f81a5; }
.titlebar { height: 38px; display: flex; align-items: center; padding-left: 14px; }
.titlebar button { display: grid; place-items: center; flex: none; }
.logo { width: 30px; height: 25px; background: #d9145f; border-left: 3px solid #ed6fa0; border-radius: 2px; color: #fff; font-weight: 700; }
.quick { display: flex; margin-left: 4px; }
.quick button, .tool30 { width: 30px; }
.tool22 { width: 22px; }
.titlebar .share { display: flex; align-items: center; gap: 7px; margin-left: 5px; color: #7cc4ee; }
.product, .docname { font-size: 16px; font-weight: 400; white-space: nowrap; }
.product { width: 199px; margin-left: 31px; }
.docname { width: 132px; }
.play { border: 5px solid transparent; border-left-color: #e6e8ec; border-right: 0; margin-right: 9px; }
.search { width: 223px; height: 26px; background: #434956; border: 1px solid #4c5260; padding: 0 4px; }
.search::placeholder { color: #a5a9b2; font-style: italic; }
.titlebar .login { display: flex; align-items: center; gap: 7px; margin-left: 5px; }
.titletools { display: flex; align-items: center; margin-left: 70px; }
.vsep { width: 1px; height: 24px; background: #454b58; margin: 0 10px 0 8px; }
.help { width: 20px; height: 20px; border-radius: 50%; background: #dfe1e6; color: #222933; font-weight: 700; }
.winbtns { display: flex; margin-left: auto; }
.winbtns button { width: 58px; }
.menubar { height: 27px; display: flex; align-items: center; gap: 28px; padding: 2px 0 0 16px; color: #b5b8be; border-bottom: 1px solid #3a414d; }
.docbtns { display: flex; margin-left: auto; padding-right: 5px; }
.docbtns button { width: 41px; display: grid; place-items: center; }
.tabs { height: 30px; display: flex; align-items: flex-end; padding-left: 4px; color: #b5b8be; }
.tabs button { height: 25px; padding: 0 12px 2px; line-height: 22px; }
.tabs .on { background: #3f4256; color: #eceef2; }
.tabs .fold { width: 19px; height: 9px; background: #fff; padding: 0; margin: 0 1px 7px 29px; display: grid; place-items: center; }
.fold::before { content: ""; border: 3px solid transparent; border-bottom-color: #333; border-top: 0; }
.tabs .dd { padding: 0; }

/* ribbon */
.ribbon { position: relative; height: 124px; display: flex; gap: 2px; padding: 0 5px 0 2px; }
.panel { display: flex; flex-direction: column; background: #3f4256; min-width: 0; }
.body { flex: 1; display: flex; padding-top: 6px; justify-content: center; }
.foot { display: flex; align-items: center; justify-content: center; gap: 9px; height: 25px; }
.foot::after { content: ""; border: 5px solid transparent; border-top-color: #e6e8ec; border-bottom: 0; }
.big { position: relative; width: 50px; display: flex; flex-direction: column; align-items: center; gap: 4px; line-height: 21px; }
.big svg { width: 40px; height: 42px; }
.big.more::after { content: ""; border: 4px solid transparent; border-top-color: #dfe2ea; border-bottom: 0; }
.small { display: grid; grid-auto-rows: 31px; align-content: start; margin-top: -3px; }
.small button { display: grid; place-items: center; }
.two { grid-template-columns: 28px 18px; }
.five { grid-template-columns: 32px 42px 30px 16px 44px; }
.p-draw { flex: 0 0 263px; }
.p-draw .body { justify-content: flex-start; padding-left: 3px; }
.p-draw .two { margin-left: 8px; }
.p-mod { flex: 0 0 163px; }
.p-ann { flex: 0 0 157px; }
.p-ann .body { justify-content: flex-start; padding-left: 4px; }
.p-ann .big { width: 54px; }
.p-ann .two { grid-template-columns: 22px 24px; }
.p-lay { flex: 0 0 313px; }
.laycol { flex: 1; padding: 0 4px 0 0; }
.combo { display: flex; align-items: center; gap: 4px; height: 27px; background: #4a536c; border: 1px solid #32384a; padding-left: 4px; }
.combo select { flex: 1; min-width: 0; height: 25px; padding-left: 2px; background: linear-gradient(to bottom right, #e6e8ec 50%, transparent 50%) right 1px center / 5px 5px no-repeat, linear-gradient(to bottom left, #e6e8ec 50%, transparent 50%) right 6px center / 5px 5px no-repeat; }
.swatch { width: 18px; height: 18px; background: #fff; }
.layicons { display: grid; grid-template-columns: repeat(5, 30px); grid-auto-rows: 31px; }
.layicons button { display: grid; place-items: center; }
.p-blk { flex: 0 0 145px; }
.p-blk .body { padding-right: 4px; }
.p-prop { flex: 0 0 249px; }
.props { flex: 1; grid-template-columns: 24px 1fr; column-gap: 3px; align-items: center; margin-right: 3px; }
.props .swatch { width: 20px; height: 20px; }
.props .rule { width: 80px; height: 1px; margin-left: 3px; background: #e6e8ec; }
.props .rule + select { padding: 0; margin-left: -3px; }
.footrow { position: relative; display: grid; }
.corner { position: absolute; right: 3px; top: 8px; }
.corner svg, .launch { width: 10px; height: 10px; }
.lite { flex: 0 0 74px; background: #4d5870; }
.lite .big { width: 74px; }
.p-view { flex: 1; }
.p-view .foot { padding-right: 8px; }
.halo { position: absolute; left: 203px; top: 0; width: 56px; height: 56px; border-radius: 50%; background: #a8b400; opacity: .5; }

.doctabs { height: 38px; display: flex; align-items: center; border-bottom: 5px solid #3f4353; }
.ham { width: 20px; height: 18px; margin-left: 21px; display: grid; place-items: center; }
.ham svg { height: 18px; }
.slash { width: 8px; }
.doctabs .slash { margin-left: 13px; }
.start { margin-left: 11px; }
.doctab { display: flex; align-items: center; align-self: stretch; padding: 0 20px 0 23px; margin-left: 7px; background: #3f4256; clip-path: polygon(14px 0, 100% 0, calc(100% - 14px) 100%, 0 100%); font-weight: 700; }
.doctab .x { margin-left: 8px; }
.doctab .x svg { width: 18px; height: 18px; }
.doctabs .add { margin-left: 2px; }
.add svg { width: 18px; height: 18px; }

/* drawing area: every item has its own place on the free canvas */
.canvas { position: relative; flex: 1; min-height: 0; background: #222430; overflow: hidden; }
.vp { position: absolute; left: 5px; top: 5px; }
.cross { position: absolute; left: 552px; top: 0; width: 98px; height: 50px; }
.ucs { position: absolute; left: 309px; bottom: 118px; width: 90px; height: 92px; }
.cube { position: absolute; right: 27px; top: 21px; width: 124px; height: 124px; }
.cube > svg { width: 124px; height: 124px; }
.cube b { position: absolute; font-weight: 400; font-size: 19px; color: #b4b6bc; }
.north { left: 52px; top: -4px; }
.south { left: 52px; bottom: -8px; }
.west { left: -6px; top: 53px; }
.east { right: -6px; top: 53px; }
.face { position: absolute; left: 35px; top: 36px; width: 54px; height: 54px; background: #aeb0b4; color: #3f434d; font-size: 32px; line-height: 48px; }
.ucsname { position: absolute; right: 55px; top: 173px; width: 69px; height: 21px; border-radius: 5px; background: #8d90a0; color: #666a78; font-size: 13px; line-height: 18px; border: 1px solid #777a88; }
.navbar { position: absolute; right: 7px; top: 225px; width: 40px; height: 259px; border-radius: 4px; background: #5a5f66; }
.navbar svg { width: 40px; height: 258px; }
.command { position: absolute; left: 323px; right: 325px; bottom: 1px; height: 72px; display: flex; }
.side { width: 32px; background: #2b2e3a; display: flex; flex-direction: column; align-items: center; justify-content: space-between; padding: 4px 0; }
.side svg { width: 18px; height: 18px; }
.grip { width: 22px; border-top: 2px dotted #8c8f98; }
.main { flex: 1; display: flex; flex-direction: column; }
.hist { height: 48px; overflow: hidden; display: flex; flex-direction: column; justify-content: flex-end; background: #929396; color: #25262a; padding: 0 4px; border-bottom: 1px solid #222; font-family: "Liberation Mono", "Noto Sans CJK SC", monospace; line-height: 18px; }
.hist p { flex: none; height: 18px; white-space: nowrap; }
.entry { flex: 1; display: flex; align-items: center; background: #b9babd; padding: 0 5px; border-radius: 0 0 3px 0; }
.entry svg { height: 18px; }
.entry input { flex: 1; margin-left: 8px; font-style: italic; }
.entry input::placeholder { color: #6c6e74; }
.tri { border: 5px solid transparent; border-top-color: #4c4e55; border-bottom: 0; margin-left: 2px; }
.tri.up { border: 5px solid transparent; border-bottom-color: #4c4e55; border-top: 0; }

.status { height: 45px; display: flex; align-items: center; border-top: 5px solid #3f4050; padding: 0 5px 10px 0; }
.model { align-self: stretch; padding: 0 22px 0 20px; margin-left: 12px; background: #3f4256; clip-path: polygon(14px 0, 100% 0, calc(100% - 14px) 100%, 0 100%); font-weight: 700; }
.lay { margin-left: 8px; }
.lay + .slash { margin: 0 4px 0 11px; }
.status .add { margin: 0 10px 0 9px; }
.cells { margin-left: auto; display: flex; gap: 2px; height: 30px; margin-top: 5px; }
.cell { display: flex; align-items: center; background: #3f4256; padding: 0 5px; }
.cell button { width: 20px; }
.cell button + button { margin-left: 10px; }
.cell button.dd { margin-left: 7px; width: 15px; }
.cell.menu { padding-right: 3px; }
.cell .dd::before { border-width: 5px 5px 0; }
.coords { padding: 0 6px 0 18px; font-size: 14px; }
.mspace { font-weight: 500; padding: 0 4px; }
.units { width: 120px; padding: 0 4px 0 10px; }
.units svg { width: 10px; height: 18px; }
.units select { flex: 1; padding-left: 17px; font-weight: 500; height: 24px; background: linear-gradient(to bottom right, #e6e8ec 50%, transparent 50%) right 1px center / 5px 5px no-repeat, linear-gradient(to bottom left, #e6e8ec 50%, transparent 50%) right 6px center / 5px 5px no-repeat; }
.thin { width: 6px; padding: 0; }

/* fading tooltip: brightens what lies below it */
.tooltip { position: absolute; left: 237px; top: 151px; width: 170px; height: 136px; padding: 10px 11px; color: #3a3d48; display: flex; flex-direction: column; justify-content: space-between; white-space: nowrap; font-size: 14px; }
.tooltip::before { content: ""; position: absolute; left: 0; top: 0; right: 0; bottom: 0; background: #36363a; mix-blend-mode: screen; }
.tooltip p { position: relative; }
.tooltip .key { display: flex; gap: 8px; font-weight: 700; padding-top: 10px; }
.key i { width: 18px; height: 18px; background: #3a3d48; }
.cursor { position: absolute; left: 231px; top: 124px; width: 12px; height: 19px; }

/* spreadsheet window */
.sheet { display: flex; flex-direction: column; min-width: 0; overflow: hidden; background: #e3e4e9; color: #333; border-top: 2px solid #14151a; }
.files { height: 45px; display: flex; align-items: center; gap: 7px; padding-top: 8px; }
.ghost { width: 13px; height: 36px; background: #d9dadf; border-radius: 0 8px 8px 0; }
.doc { width: 50px; height: 36px; background: #d9dadf; border-radius: 8px; display: grid; place-items: center; }
.file { flex: 1; height: 37px; background: #fff; border-radius: 8px 0 0 8px; display: flex; align-items: center; gap: 6px; padding-left: 10px; }
.badge { width: 20px; height: 20px; background: #1fa463; color: #fff; border-radius: 2px; font-weight: 700; }
.smenu { height: 46px; display: flex; align-items: center; padding: 2px 0 0 2px; border-bottom: 1px solid #cfd0d6; }
.chev { width: 10px; height: 10px; margin-left: 8px; }
.sep { width: 1px; height: 20px; background: #c5c6cc; }
.smenu .sep { margin: 0 16px; }
.dots svg { width: 18px; height: 10px; }
.stabs { display: flex; gap: 15px; font-size: 17px; margin-left: -5px; }
.stabs a { height: 34px; line-height: 34px; }
.stabs .on { color: #1d8a66; font-weight: 700; border-bottom: 2px solid #1d8a66; }
.stool { height: 93px; display: flex; align-items: center; background: #fff; padding-bottom: 4px; }
.clipgrp { position: relative; width: 131px; height: 82px; display: grid; grid-template: 34px 34px / 78px 50px; align-content: center; border-right: 1px solid #cfd0d6; }
.clipgrp button { display: flex; align-items: center; }
.cutoff { width: 14px; margin-right: 4px; }
.clipgrp .chev { margin-left: 5px; }
.launch { position: absolute; right: 4px; bottom: 0; filter: brightness(.6); }
.fontgrp { flex: 1; padding: 0 0 5px 9px; }
.fontgrp input { width: 180px; height: 30px; border: 1px solid #cfd0d6; border-radius: 4px; padding-left: 12px; }
.fmt { display: flex; gap: 17px; padding: 11px 0 0 8px; }
.fmt svg { width: 18px; height: 18px; }
.namebox { height: 43px; padding-top: 9px; background: #dadbe0; border-bottom: 1px solid #cfd0d6; }
.namebox input { display: block; width: 100%; height: 33px; background: #fff; padding-left: 226px; font-size: 16px; }
.colhead { height: 34px; padding: 10px 0 0 26px; background: linear-gradient(#ececf0 8px, #d8d8d8 8px); color: #1d8a66; font-size: 16px; border-bottom: 2px solid #4f8a3e; }
.filter { height: 16px; background: #3f4354; padding-left: 40px; }
.filter button { width: 19px; height: 16px; background: #fff; display: grid; place-items: center; }
.filter button::before { content: ""; border: 4px solid transparent; border-top-color: #23a566; border-bottom: 0; }
.gridwrap { flex: 1; min-height: 0; overflow: hidden; background: #fff; border-top: 1px solid #111; }
table { width: 100%; border-collapse: separate; border-spacing: 0; table-layout: fixed; font-size: 20px; line-height: 26px; color: #111; }
td { height: 55px; border-bottom: 1px solid #111; padding-left: 3px; white-space: nowrap; }
td:first-child { width: 60px; padding: 0; border-right: 1px solid #111; text-align: center; }
.h td { color: #f0f0f8; background: #46437d; }
.h td:first-child { background: #673b7d; }
.sheets { height: 33px; display: flex; align-items: center; border-bottom: 1px solid #cfd0d6; }
.arr { flex: none; width: 28px; padding-left: 4px; }
.arr svg { width: 12px; height: 12px; }
.sheets .sep { flex: none; }
.sheets .st { flex: none; padding: 0 14px; height: 32px; }
.sheets .st.on { background: #fff; color: #1d8a66; font-weight: 700; }
.sheets .arr + .st { margin-left: 1px; }
.sfoot { height: 27px; display: flex; align-items: center; padding-left: 12px; white-space: nowrap; gap: 18px; }
.sfoot svg { width: 18px; height: 18px; }

/* taskbar */
.taskbar { position: relative; flex: 0 0 50px; display: flex; align-items: stretch; background: #1e2025; gap: 1px; }
.mark { position: absolute; left: 11px; top: 0; display: flex; align-items: center; gap: 8px; color: #5d5f63; font-size: 34px; line-height: 40px; font-weight: 700; }
.mark i { width: 39px; height: 39px; border-radius: 6px; background: #66686b; }
.taskbar button { position: relative; display: grid; place-items: center; }
.startbtn { width: 60px; }
.app { width: 61px; border-bottom: 3px solid #76b0e0; }
.startbtn + .app { margin-left: 2px; }
.app svg { width: 30px; height: 30px; }
.app.on { background: #4b4e51; }
.acad { width: 27px; height: 30px; background: #d9145f; border-radius: 3px; color: #fff; display: flex; flex-direction: column; overflow: hidden; }
.acad b { height: 21px; }
.acad small { font-size: 7px; line-height: 9px; font-weight: 700; background: #7c0d3a; }
.tray { margin-left: auto; display: flex; }
.tray button { width: 30px; }
.tray .lang { width: 50px; }
.tray .note { width: 44px; margin-right: 14px; }
.peek { width: 5px; border-left: 1px solid #55585c; }

.subtitle { position: fixed; left: 0; right: 0; bottom: 112px; text-align: center; font: 500 56px/72px "Noto Sans CJK SC", sans-serif; color: #fff; -webkit-text-stroke: 10px #000; paint-order: stroke fill; pointer-events: none; }
```
